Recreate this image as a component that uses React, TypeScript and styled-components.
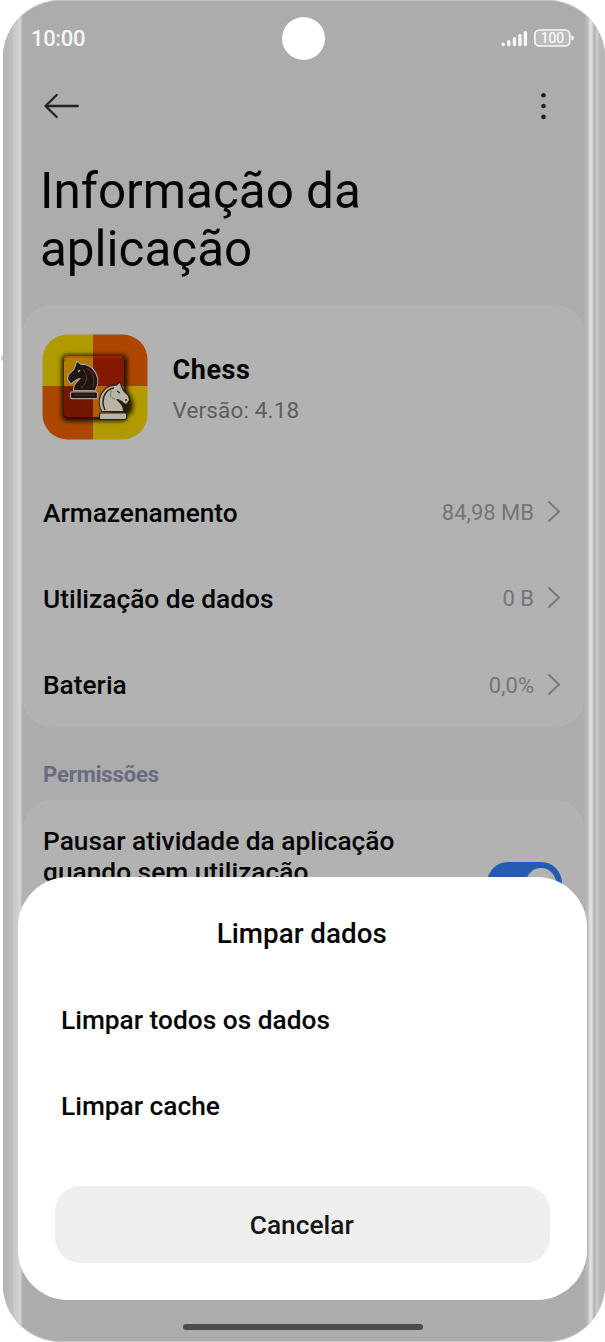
import React from 'react';
import styled, { createGlobalStyle } from 'styled-components';

const GlobalStyle = createGlobalStyle`
  * { box-sizing: border-box; }
  body { margin: 0; background: #fff; font-family: Roboto, sans-serif; color: #050505; }
`;

const Stage = styled.main`
  position: relative;
  width: 605px;
  height: 1342px;
  padding-left: 3px;
  overflow: hidden;
`;

const SideKey = styled.span`
  position: absolute;
  left: 1px;
  top: 355px;
  width: 4px;
  height: 6px;
  border-radius: 2px;
  background: #d2d2d2;
`;

const Phone = styled.div`
  position: relative;
  display: flex;
  width: 602px;
  height: 1342px;
  border-radius: 58px;
  overflow: hidden;
  background: #acacac;
  box-shadow: inset 0 1px 0 #c2c2c2, inset 0 -1px 0 #c6c6c6;
`;

const Rail = styled.div<{ $side: 'left' | 'right' }>`
  width: 20px;
  flex: none;
  background: ${({ $side }) =>
    $side === 'left'
      ? 'linear-gradient(90deg, #b5b5b6 0, #b7b7b9 4px, #bfbfc4 7px, #bcbcc2 9px, #cacace 11px, #cbcbd0 14px, #d6d6d9 16px, #d6d6d8 17px, #b9b9ba 19px, #aeaeae 20px)'
      : 'linear-gradient(90deg, #b2b2b3 0, #bdbdc2 3px, #e1e1e5 5px, #dedee2 7px, #b0b0b4 9px, #b8b8bc 10px, #cfcfd3 12px, #bcbcc1 14px, #b5b5b6 17px, #b9b9b9 20px)'};
`;

const Screen = styled.div`
  width: 562px;
  flex: none;
  display: flex;
  flex-direction: column;
`;

const StatusBar = styled.header`
  display: flex;
  align-items: center;
  justify-content: space-between;
  height: 77px;
  padding: 0 10px 0 8px;
`;

const Clock = styled.time`
  color: #f7f7f7;
  font-size: 22px;
  font-weight: 500;
  line-height: 26px;
  letter-spacing: -0.35px;
`;

const StatusIcons = styled.svg`
  display: block;
  width: 76px;
  height: 24px;
  margin-bottom: 1px;
`;

const Camera = styled.span`
  width: 43px;
  height: 43px;
  border-radius: 50%;
  background: #fff;
  position: absolute;
  left: 279px;
  top: 17px;
`;

const Toolbar = styled.nav`
  display: flex;
  justify-content: space-between;
  align-items: center;
  height: 58px;
  padding: 0 35.5px 0 20px;
`;

const IconButton = styled.button`
  display: flex;
  padding: 0;
  border: 0;
  background: none;
`;

const Title = styled.h1`
  margin: 27px 0 27px 17px;
  font-size: 49.4px;
  line-height: 58px;
  font-weight: 400;
`;

const Card = styled.section`
  margin: 0 1px 0 0;
  border-radius: 28px;
  background: #b2b2b2;
`;

const AppHeader = styled.div`
  display: flex;
  align-items: center;
  gap: 24.5px;
  height: 163px;
  padding-left: 19px;
`;

const AppName = styled.h2`
  margin: 0;
  font-size: 27px;
  line-height: 36px;
  font-weight: 700;
  letter-spacing: 0.55px;
`;

const Version = styled.p`
  margin: 4px 0 0;
  font-size: 22.5px;
  line-height: 36px;
  letter-spacing: 0.15px;
  color: #5e5e5e;
`;

const AppText = styled.div`
  padding-top: 6px;
`;

const Row = styled.div`
  display: flex;
  align-items: center;
  height: 86.3px;
  padding: 2px 23px 0 20px;
`;

const RowLabel = styled.span`
  flex: 1;
  padding-top: 1px;
  font-size: 26.3px;
  font-weight: 500;
`;

const RowValue = styled.span`
  margin-right: 13px;
  padding-top: 1px;
  font-size: 22px;
  color: #757575;
`;

const SectionLabel = styled.h3`
  margin: 0;
  height: 73px;
  padding: 34px 0 0 20px;
  font-size: 22px;
  line-height: 28px;
  font-weight: 700;
  letter-spacing: -0.1px;
  color: #696b80;
`;

const PauseRow = styled.div`
  display: flex;
  justify-content: space-between;
  align-items: center;
  height: 166px;
  padding: 0 22px 0 20px;
`;

const PauseLabel = styled.p`
  margin: 0;
  align-self: flex-start;
  padding-top: 26px;
  width: 380px;
  font-size: 26.3px;
  line-height: 31px;
  font-weight: 500;
`;

const Toggle = styled.span`
  display: flex;
  justify-content: flex-end;
  width: 75px;
  height: 42px;
  padding: 6px;
  border-radius: 21px;
  background: #245cb2;
`;

const Knob = styled.i`
  width: 30px;
  height: 30px;
  border-radius: 50%;
  background: #b2b2b2;
`;

const Sheet = styled.section`
  position: absolute;
  left: 15px;
  top: 876.5px;
  width: 568.5px;
  height: 423.5px;
  padding: 37.5px 37px 0;
  border-radius: 50px;
  background: #fff;
`;

const SheetTitle = styled.h2`
  margin: 0 1px 46px 0;
  font-size: 27.8px;
  line-height: 40px;
  font-weight: 500;
  text-align: center;
`;

const SheetOption = styled.p`
  margin: 0 0 46px 6px;
  font-size: 26.3px;
  line-height: 40px;
  font-weight: 500;
`;

const CancelButton = styled.button`
  display: block;
  width: 494.5px;
  height: 77px;
  margin-top: 60px;
  padding: 0 1px 0 0;
  border: 0;
  border-radius: 25px;
  background: #efefef;
  font: 500 26.3px Roboto, sans-serif;
  color: #161616;
`;

const HomeBar = styled.span`
  position: absolute;
  left: 179.5px;
  top: 1324px;
  width: 240px;
  height: 6px;
  border-radius: 3px;
  background: #4d4d4d;
`;

const ChessIcon = () => (
  <svg width="106" height="106" viewBox="0 0 106 106">
    <defs>
      <clipPath id="tile"><rect x=".5" y=".5" width="105" height="105" rx="25" /></clipPath>
      <clipPath id="board"><rect x="22" y="22" width="60" height="61" rx="4" /></clipPath>
      <filter id="soft" x="-30%" y="-30%" width="160%" height="160%"><feGaussianBlur stdDeviation="2" /></filter>
      <linearGradient id="amber" x2="1" y2="1"><stop stopColor="#b28500" /><stop offset="1" stopColor="#ad4e00" /></linearGradient>
      <path id="knight" d="M6 29 C6 23 10 21 13 17 C10 17 8 18 6 20 L3 22 L0 18 L1 14 L6 9 L8 5 L9 1 L13 4 C21 3 27 9 29 17 C30 23 28 26 27 29 Z" />
      <rect id="base" x="3" y="31.5" width="26" height="5.5" rx="1" />
    </defs>
    <g clipPath="url(#tile)">
      <path fill="#b09a00" d="M0 0H51V52H0zM51 52H106V106H51z" />
      <path fill="#ac4600" d="M51 0H106V52H51zM0 52H51V106H0z" />
      <rect x="20" y="21" width="65" height="66" rx="5" fill="#171000" filter="url(#soft)" />
      <g clipPath="url(#board)">
        <path fill="#741700" d="M21 21H83V84H21z" />
        <path fill="url(#amber)" d="M22 22H51V52H22zM51 52H82V83H51z" />
        <path fill="#831900" d="M51 22H83V52H51z" />
      </g>
      <path d="M23 28V26Q23 23 26 23H79" fill="none" stroke="#a33a0c" strokeWidth=".8" />
      <use href="#knight" x="62" y="51" fill="#261c00" filter="url(#soft)" />
    </g>
    <g transform="translate(26 27)">
      <g stroke="#a99b92" strokeWidth="2.4" strokeLinejoin="round" fill="#a99b92">
        <use href="#knight" /><use href="#base" />
      </g>
      <g fill="#211512"><use href="#knight" /><use href="#base" /></g>
      <path d="M15 8 C19 14 21 20 13 27" fill="none" stroke="#5b4035" strokeWidth="1" />
      <path d="M19 7 C25 11 27 18 25 26 M6 34H26" fill="none" stroke="#49332a" strokeWidth="1.2" />
      <path d="M10 11L12 9" stroke="#b7a59a" strokeWidth="1.3" />
    </g>
    <g transform="translate(87 48) scale(-1 1)">
      <g stroke="#2a2017" strokeWidth="2.2" strokeLinejoin="round" fill="#b8b5a7">
        <use href="#knight" /><use href="#base" />
      </g>
      <g fill="#b8b5a7"><use href="#knight" /><use href="#base" /></g>
      <path d="M15 6 C22 7 26 13 26 20 C26 24 25 26 24 28" fill="none" stroke="#332b22" strokeWidth="1.5" />
      <path d="M14 17 C19 16 20 12 17 9" fill="none" stroke="#766f61" strokeWidth="1" />
      <path d="M9 11L12 9M2 18L4 18" stroke="#30271f" strokeWidth="1.3" />
    </g>
  </svg>
);

const Chevron = () => (
  <svg width="14" height="24" viewBox="0 0 14 24" fill="none" stroke="#7c7c7c" strokeWidth="2.1" strokeLinecap="round" strokeLinejoin="round">
    <path d="M2 2 L12 11.5 L2 21" />
  </svg>
);

const rows = [
  ['Armazenamento', '84,98 MB'],
  ['Utilização de dados', '0 B'],
  ['Bateria', '0,0%'],
];

export default function App() {
  return (
    <>
      <GlobalStyle />
      <Stage>
        <SideKey />
        <Phone>
          <Rail $side="left" />
          <Screen>
            <StatusBar>
              <Clock>10:00</Clock>
              <StatusIcons viewBox="0 0 76 24">
                <g stroke="#f7f7f7" strokeWidth="3.4" strokeLinecap="round">
                  <path d="M4.2 18.6V18.2M9.8 18.6V15.8M15.4 18.6V12.7M21 18.6V9.6M26.4 18.6V6.6" />
                </g>
                <rect x="35.8" y="4" width="35" height="16" rx="4.5" fill="#bcbcbc" stroke="#f7f7f7" strokeWidth="1.7" />
                <path d="M73 10q1.5 0 1.5 2t-1.5 2z" fill="#f7f7f7" stroke="#f7f7f7" />
                <text x="53.5" y="17" textAnchor="middle" fontSize="13.8" fontWeight="400" fontFamily="Roboto" fill="#fff" stroke="#fff" strokeWidth=".2">100</text>
              </StatusIcons>
            </StatusBar>
            <Toolbar>
              <IconButton aria-label="Voltar">
                <svg width="37" height="26" viewBox="0 0 37 26" fill="none" stroke="#222" strokeWidth="2.3" strokeLinecap="round" strokeLinejoin="round">
                  <path d="M34.8 13H2.5M13.7 2L2.5 13L13.7 24" />
                </svg>
              </IconButton>
              <IconButton aria-label="Mais opções">
                <svg width="12" height="28" viewBox="0 0 12 28" fill="#202020">
                  <circle cx="5.5" cy="3.2" r="2.3" /><circle cx="5.5" cy="14" r="2.3" /><circle cx="5.5" cy="24.9" r="2.3" />
                </svg>
              </IconButton>
            </Toolbar>
            <Title>Informação da<br />aplicação</Title>
            <Card>
              <AppHeader>
                <ChessIcon />
                <AppText>
                  <AppName>Chess</AppName>
                  <Version>Versão: 4.18</Version>
                </AppText>
              </AppHeader>
              {rows.map(([label, value]) => (
                <Row key={label}>
                  <RowLabel>{label}</RowLabel>
                  <RowValue>{value}</RowValue>
                  <Chevron />
                </Row>
              ))}
            </Card>
            <SectionLabel>Permissões</SectionLabel>
            <Card>
              <PauseRow>
                <PauseLabel>Pausar atividade da aplicação<br />quando sem utilização</PauseLabel>
                <Toggle><Knob /></Toggle>
              </PauseRow>
            </Card>
          </Screen>
          <Rail $side="right" />
          <Camera />
          <Sheet>
            <SheetTitle>Limpar dados</SheetTitle>
            <SheetOption>Limpar todos os dados</SheetOption>
            <SheetOption>Limpar cache</SheetOption>
            <CancelButton>Cancelar</CancelButton>
          </Sheet>
          <HomeBar />
        </Phone>
      </Stage>
    </>
  );
}
